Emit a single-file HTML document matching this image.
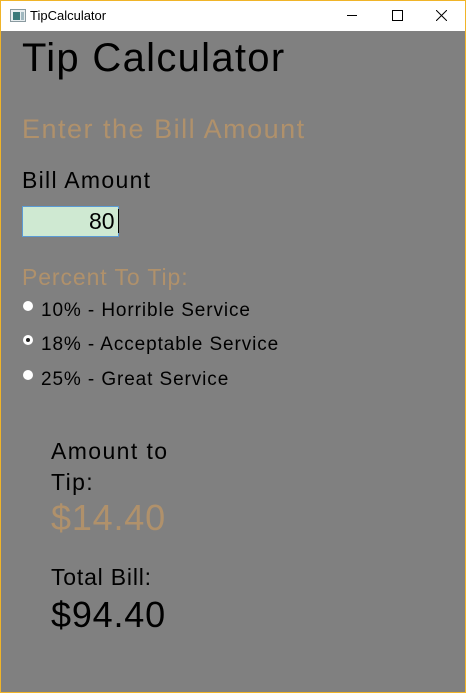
<!DOCTYPE html>
<html><head><meta charset="utf-8"><style>
body{margin:0;width:466px;height:693px;overflow:hidden;font-family:"Liberation Sans",sans-serif;background:#f0b428;position:relative}
.title{position:absolute;left:1px;top:1px;width:464px;height:30px;background:#fff}
.content{position:absolute;left:1px;top:31px;width:464px;height:661px;background:#808080}
.t{position:absolute;white-space:nowrap;line-height:1}
.tan{color:#b0916b}
</style></head><body>
<div class="title">
 <svg style="position:absolute;left:9px;top:8px" width="16" height="14"><rect x="0.5" y="0.5" width="15" height="12" fill="#e8eef0" stroke="#8a9aa0"/><rect x="3" y="3" width="7" height="8" fill="#3a7a7a"/><rect x="11" y="3" width="3" height="8" fill="#a0b8c0"/></svg>
 <div class="t" style="left:29px;top:8px;font-size:13px;color:#000">TipCalculator</div>
 <div style="position:absolute;left:346px;top:14px;width:10px;height:1px;background:#000"></div>
 <div style="position:absolute;left:391px;top:9px;width:9px;height:9px;border:1px solid #000"></div>
 <svg style="position:absolute;left:435px;top:9px" width="11" height="11"><path d="M0 0L11 11M11 0L0 11" stroke="#000" stroke-width="1"/></svg>
</div>
<div class="content">
 <div class="t" style="left:21px;top:7px;font-size:40px;letter-spacing:1.3px">Tip Calculator</div>
 <div class="t tan" style="left:21px;top:85px;font-size:27px;letter-spacing:1.5px">Enter the Bill Amount</div>
 <div class="t" style="left:21px;top:138px;font-size:23px;letter-spacing:1.3px">Bill Amount</div>
 <div style="position:absolute;left:21px;top:175px;width:97px;height:31px;background:#cfe9d2;border:1px solid #5b9bd5;box-sizing:border-box"></div>
 <div class="t" style="left:88px;top:179px;font-size:23px">80</div>
 <div style="position:absolute;left:117px;top:178px;width:1px;height:24px;background:#000"></div>
 <div class="t tan" style="left:21px;top:235px;font-size:23px;letter-spacing:0.9px">Percent To Tip:</div>
 <div style="position:absolute;left:22px;top:270px;width:10px;height:10px;border-radius:50%;background:#fff"></div>
 <div class="t" style="left:40px;top:270px;font-size:19px;letter-spacing:0.9px">10% - Horrible Service</div>
 <div style="position:absolute;left:22px;top:304px;width:10px;height:10px;border-radius:50%;background:#fff"></div>
 <div style="position:absolute;left:25px;top:307px;width:4px;height:4px;border-radius:50%;background:#222"></div>
 <div class="t" style="left:40px;top:304px;font-size:19px;letter-spacing:0.9px">18% - Acceptable Service</div>
 <div style="position:absolute;left:22px;top:339px;width:10px;height:10px;border-radius:50%;background:#fff"></div>
 <div class="t" style="left:40px;top:339px;font-size:19px;letter-spacing:0.9px">25% - Great Service</div>
 <div class="t" style="left:50px;top:405px;font-size:23px;line-height:31px;letter-spacing:1.4px">Amount to<br>Tip:</div>
 <div class="t tan" style="left:50px;top:469px;font-size:36px;letter-spacing:0.8px">$14.40</div>
 <div class="t" style="left:50px;top:535px;font-size:23px;letter-spacing:0.8px">Total Bill:</div>
 <div class="t" style="left:50px;top:566px;font-size:36px;letter-spacing:0.8px">$94.40</div>
</div>
</body></html>
